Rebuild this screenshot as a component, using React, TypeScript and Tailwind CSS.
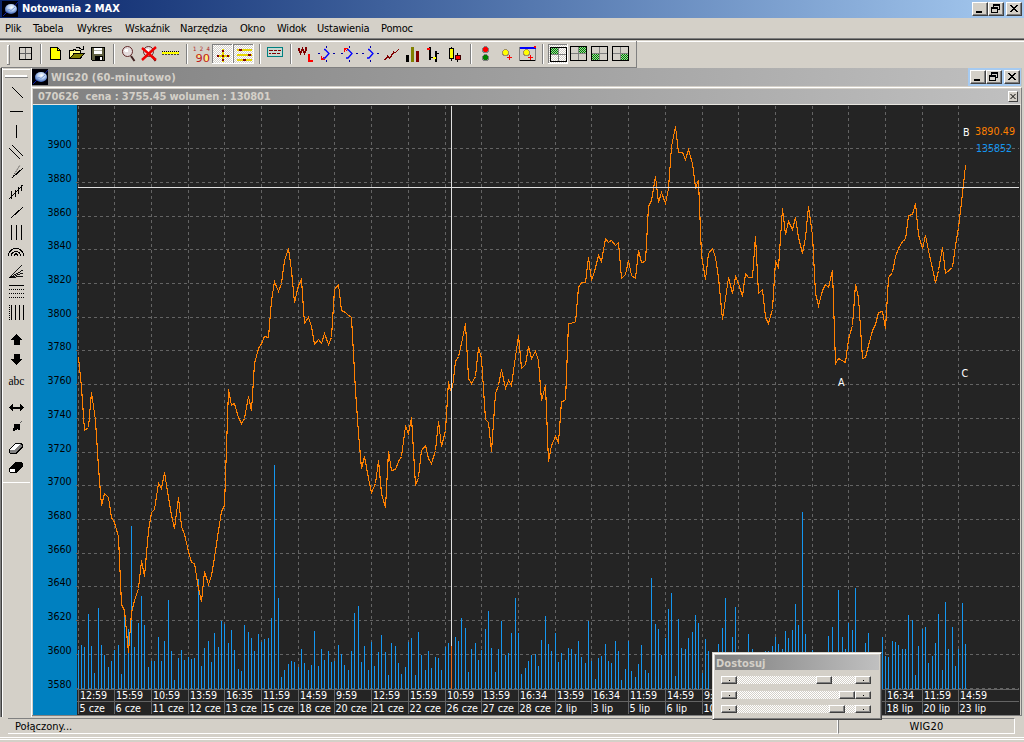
import React from "react";

const MENU = [
  { label: "Plik", width: "w-[28px]" },
  { label: "Tabela", width: "w-[44px]" },
  { label: "Wykres", width: "w-[48px]" },
  { label: "Wskaźnik", width: "w-[55px]" },
  { label: "Narzędzia", width: "w-[60px]" },
  { label: "Okno", width: "w-[37px]" },
  { label: "Widok", width: "w-[40px]" },
  { label: "Ustawienia", width: "w-[64px]" },
  { label: "Pomoc", width: "w-[40px]" },
];

const GRID_Y = [148, 182, 216, 249, 283, 317, 350, 384, 418, 452, 485, 519, 553, 586, 620, 654, 688];

const AXIS = [
  ["12:59", "5 cze"], ["15:59", "6 cze"], ["10:59", "11 cze"], ["13:59", "12 cze"], ["16:35", "13 cze"],
  ["11:59", "15 cze"], ["14:59", "18 cze"], ["9:59", "20 cze"], ["12:59", "21 cze"], ["15:59", "22 cze"],
  ["10:59", "26 cze"], ["13:59", "27 cze"], ["16:34", "28 cze"], ["13:59", "2 lip"], ["16:34", "3 lip"],
  ["11:59", "5 lip"], ["14:59", "6 lip"], ["9:59", "10 lip"], ["", ""], ["", ""], ["", ""], ["", ""],
  ["16:34", "18 lip"], ["11:59", "20 lip"], ["14:59", "23 lip"],
];

const PRICE =
  "78,357 81,387 84,430 88,427 91,392 95,420 98,467 101,505 104,493 108,497 111,517 114,522 118,536 121,604 124,610 128,652 131,612 134,600 138,588 141,560 144,576 148,530 151,512 154,509 158,483 161,488 164,472 168,497 171,515 174,528 178,497 181,526 184,534 188,551 191,562 194,563 198,588 201,601 204,571 208,584 211,575 214,557 218,530 221,511 224,505 228,389 231,405 234,403 238,417 241,423 244,418 248,396 251,410 254,363 258,348 261,343 264,336 268,337 271,300 274,281 278,291 281,283 284,260 288,248 291,270 294,302 298,285 301,279 304,323 308,317 311,326 314,344 318,339 321,343 324,333 328,344 331,337 334,289 338,284 341,310 345,312 348,315 351,317 355,390 358,433 361,468 364,456 368,478 371,492 375,483 378,460 381,493 385,507 388,451 391,470 395,469 398,461 401,456 405,426 408,433 411,417 415,485 418,477 421,450 425,445 428,458 431,463 435,450 438,421 441,446 445,430 448,381 450,390 452,387 455,361 458,356 461,343 465,323 468,378 471,383 475,376 478,347 481,358 485,419 488,422 491,451 495,393 498,385 501,369 505,388 508,380 511,385 514,363 518,335 521,368 525,364 528,346 531,358 535,351 538,360 541,400 545,385 548,461 551,445 555,436 558,442 561,401 565,400 568,323 575,322 578,287 581,282 585,282 588,257 591,280 594,271 598,255 601,261 605,238 608,242 611,240 615,245 618,242 621,278 625,274 628,260 631,275 635,278 638,250 641,262 645,261 648,206 651,200 655,176 658,202 661,192 665,203 668,188 671,146 675,126 678,152 682,152 685,159 688,149 692,163 695,187 698,180 701,255 705,279 708,253 712,248 715,257 718,277 722,319 725,298 728,277 732,293 735,276 738,283 742,296 745,273 748,277 752,277 755,236 758,293 762,289 765,317 768,323 772,309 775,261 778,267 782,208 785,234 788,221 792,229 795,217 798,237 802,253 805,237 808,206 812,235 815,293 818,305 822,290 825,284 828,287 832,270 835,363 838,358 845,362 848,339 852,325 855,284 858,297 862,358 865,357 868,345 872,330 875,324 878,312 882,311 885,328 888,277 892,272 895,256 898,248 902,241 905,239 908,215 912,214 915,203 918,234 922,248 925,235 928,250 932,268 935,282 938,270 942,247 945,273 952,267 955,245 958,227 961,202 965,165";

// one row per grid column, 11 hourly bars each
const VOLUME = [
  39, 44, 42, 75, 43, 16, 81, 44, 34, 22, 28,
  39, 44, 15, 72, 60, 163, 42, 66, 93, 64, 22,
  28, 28, 52, 28, 48, 89, 38, 9, 31, 39, 29,
  32, 30, 31, 110, 23, 41, 48, 27, 56, 42, 68,
  65, 46, 59, 39, 20, 18, 64, 57, 51, 38, 55,
  47, 50, 51, 71, 224, 91, 12, 19, 25, 28, 27,
  22, 40, 26, 19, 24, 58, 23, 40, 29, 38, 27,
  28, 44, 35, 24, 19, 38, 76, 83, 27, 43, 19,
  47, 23, 37, 54, 37, 14, 46, 43, 26, 15, 22,
  47, 51, 14, 57, 34, 19, 38, 21, 32, 31, 19,
  42, 46, 43, 52, 48, 71, 61, 17, 40, 46, 29,
  39, 60, 78, 41, 17, 40, 68, 34, 36, 56, 91,
  56, 15, 21, 28, 34, 35, 23, 49, 73, 45, 38,
  56, 27, 36, 29, 41, 40, 35, 48, 32, 26, 68,
  28, 10, 31, 33, 45, 28, 26, 48, 38, 9, 20,
  48, 18, 12, 25, 44, 19, 16, 111, 65, 60, 34,
  51, 80, 96, 13, 70, 41, 40, 51, 57, 74, 66,
  16, 50, 38, 32, 32, 45, 61, 91, 32, 52, 82,
  32, 32, 32, 55, 40, 32, 32, 32, 38, 38, 43,
  52, 45, 40, 58, 51, 59, 85, 64, 177, 55, 32,
  39, 32, 32, 32, 32, 53, 62, 32, 99, 52, 40,
  66, 59, 101, 32, 32, 46, 56, 32, 32, 32, 52,
  33, 32, 48, 47, 44, 40, 40, 74, 69, 14, 43,
  60, 62, 26, 33, 46, 75, 19, 87, 40, 62, 23,
  40, 86, 45,
];

const barX = (i: number) => Math.floor(78 + 3.337 * i);

interface GlyphProps {
  x: number;
  y?: number;
  w: number;
  h?: number;
  className?: string;
  children?: React.ReactNode;
}

// Every glyph is drawn in window coordinates
function Glyph({ x, y = 43, w, h = 22, className = "", children }: GlyphProps) {
  return (
    <svg
      width={w}
      height={h}
      viewBox={`${x} ${y} ${w} ${h}`}
      shapeRendering="crispEdges"
      fill="none"
      className={`shrink-0 ${className}`}
    >
      {children}
    </svg>
  );
}

function Sep({ x, w, at }: { x: number; w: number; at: number }) {
  return (
    <Glyph x={x} w={w}>
      <rect x={at} y={44} width={1} height={20} fill="#808080" />
      <rect x={at + 1} y={44} width={1} height={20} fill="#fff" />
    </Glyph>
  );
}

function Pressed({ x, w }: { x: number; w: number }) {
  return (
    <>
      <rect x={x} y={44} width={w} height={20} fill="url(#dither)" />
      <path d={`M${x + 0.5} 64V44.5H${x + w}`} stroke="#808080" />
      <path d={`M${x} 63.5H${x + w - 0.5}V44`} stroke="#fff" />
    </>
  );
}

function Quad({ x, y = 47, fx, fy }: { x: number; y?: number; fx: number; fy: number }) {
  return (
    <>
      <path d={`M${x + 8.5} ${y}v14M${x} ${y + 7.5}h17`} stroke="#808080" />
      <rect x={fx} y={fy} width={7} height={6} fill="url(#green)" />
      <rect x={x + 0.5} y={y + 0.5} width={16} height={14} stroke="#000" />
    </>
  );
}

function Magnifier({ x }: { x: number }) {
  return (
    <>
      <circle cx={x + 5.5} cy={51.5} r={5} fill="#e4dcdc" stroke="#602828" shapeRendering="auto" />
      <circle cx={x + 4.5} cy={50.5} r={2} fill="#fff" />
      <path d={`M${x + 9} 56l3.5 5`} stroke="#402020" strokeWidth={2} shapeRendering="auto" />
    </>
  );
}

function Turn({ x, children }: { x: number; children?: React.ReactNode }) {
  return (
    <>
      <path d={`M${x - 1} 49.5h1l4 4-4 4.500h-2`} stroke="#0000ff" strokeWidth={1.3} shapeRendering="auto" />
      <path d={`M${x + 1.5} 46v2M${x + 1.5} 60v2M${x - 7} 53.5h2M${x + 8} 53.5h2`} stroke="#0000a0" />
      {children}
    </>
  );
}

function Globe({ className = "" }: { className?: string }) {
  return (
    <svg width="16" height="16" viewBox="0 0 16 16" className={`shrink-0 ${className}`}>
      <defs>
        <radialGradient id="globe" cx="55%" cy="35%" r="65%">
          <stop offset="0" stopColor="#ffffff" />
          <stop offset="0.5" stopColor="#b4ccf0" />
          <stop offset="1" stopColor="#3a62b8" />
        </radialGradient>
      </defs>
      <rect width="16" height="16" fill="#000008" />
      <ellipse cx="9" cy="8" rx="6" ry="5" fill="url(#globe)" />
      <path d="M3.500 10L7 8.500L9 9.500L13 6" fill="none" stroke="#7898d4" strokeWidth="1" />
      <path d="M1 15L5 11M13 4.500L16 1" fill="none" stroke="#101ea0" strokeWidth="1" />
    </svg>
  );
}

function CaptionButton({ kind }: { kind: "min" | "restore" | "close" }) {
  return (
    <div className="h-[14px] w-4 shrink-0 border border-t-white border-r-[#404040] border-b-[#404040] border-l-white bg-[#d4d0c8] shadow-[inset_-1px_-1px_#808080]">
      <svg width="14" height="12" viewBox="0 0 14 12" shapeRendering="crispEdges" fill="none">
        {kind === "min" && <path d="M3 9h6" stroke="#000" strokeWidth="2" />}
        {kind === "restore" && (
          <path d="M4.5 4V1.5h6v5H9M4 2h7M2.5 4.5h6v5h-6zM2 5h7" stroke="#000" />
        )}
        {kind === "close" && (
          <path
            d="M3 2h2v1h1v1h2V3h1V2h2v1h-1v1H9v1H8v1h1v1h1v1h1v1H9V8H8V7H6v1H5v1H3V8h1V7h1V6h1V5H5V4H4V3H3z"
            fill="#000"
          />
        )}
      </svg>
    </div>
  );
}

function TitleBar() {
  return (
    <div className="flex h-[18px] shrink-0 items-center bg-linear-to-r from-[#0a246a] to-[#a6caf0] pr-[2px] pl-[2px]">
      <Globe />
      <span className="ml-1 flex-1 text-[11px] leading-[18px] font-bold tracking-[-0.05px] text-white">
        Notowania 2 MAX
      </span>
      <CaptionButton kind="min" />
      <CaptionButton kind="restore" />
      <div className="w-[2px]" />
      <CaptionButton kind="close" />
    </div>
  );
}

function MenuBar() {
  return (
    <div className="flex h-5 shrink-0 pt-px pl-[5px] text-[11px] leading-5 tracking-[-0.2px]">
      {MENU.map((item) => (
        <div key={item.label} className={`shrink-0 whitespace-nowrap ${item.width}`}>
          {item.label}
        </div>
      ))}
    </div>
  );
}

function Toolbar() {
  return (
    <div className="flex h-[27px] w-[636px] shrink-0 border-r border-b border-[#808080] pt-[2px] pl-[2px]">
      <Glyph x={3} w={9}>
        <path d="M7.5 64V45.5h2" stroke="#fff" />
        <path d="M9.5 45v19.5h-3" stroke="#808080" />
      </Glyph>
      <Glyph x={12} w={24}>
        <rect x={19.5} y={47.5} width={12} height={12} stroke="#000" />
        <path d="M25.5 48v11M20 53.5h11" stroke="#606060" />
      </Glyph>
      <Sep x={36} w={8} at={40} />
      <Glyph x={44} w={21}>
        <path d="M50.5 47.5h7l3 3v9h-10z" fill="#ffff00" stroke="#000" />
        <path d="M57.5 47v3.5h3" stroke="#000" />
      </Glyph>
      <Glyph x={65} w={22}>
        <path d="M69.5 58.5v-8h4v-1h2v1h5v3h3l-3.500 5.500z" fill="#ffff80" stroke="#000" />
        <path d="M70 58.5l4-5h10l-4 5z" fill="#808000" stroke="#000" />
        <path d="M76 47.500h3l2 1.500h2M83.500 46v4" stroke="#000" />
      </Glyph>
      <Glyph x={87} w={21}>
        <path d="M91.500 47.500h13v13h-12l-1-1z" fill="#606040" stroke="#000" />
        <rect x={94} y={48} width={8} height={6} fill="#fff" />
        <rect x={94} y={50} width={8} height={1} fill="#b0b0a0" />
        <rect x={95} y={56} width={8} height={5} fill="#000" />
        <rect x={100} y={57} width={2} height={3} fill="#fff" />
      </Glyph>
      <Sep x={108} w={10} at={113} />
      <Glyph x={118} w={20}>
        <Magnifier x={122} />
      </Glyph>
      <Glyph x={138} w={22}>
        <Magnifier x={143} />
        <path d="M142 48l14 12M156 47l-14 13" stroke="#f00000" strokeWidth={2.4} shapeRendering="auto" />
      </Glyph>
      <Glyph x={160} w={22}>
        <rect x={162} y={52} width={17} height={2} fill="#ffff00" />
        <path d="M162 51.500h17" stroke="#000" strokeDasharray="1 1" />
        <path d="M162 54.500h17" stroke="#404040" strokeDasharray="2 1" />
      </Glyph>
      <Sep x={182} w={8} at={186} />
      <Glyph x={190} w={22}>
        <rect x={197} y={54} width={3} height={3} fill="#ffee80" />
        <rect x={205} y={54} width={3} height={7} fill="#ffee80" />
        <text x={193} y={50.5} fontSize={6} textLength={17} fill="#b02020">
          124
        </text>
        <text x={195.500} y={62} fontSize={10.500} textLength={14.500} lengthAdjust="spacingAndGlyphs" fill="#c02020">
          90
        </text>
      </Glyph>
      <Glyph x={212} w={21}>
        <Pressed x={212} w={21} />
        <path d="M223 49v13M217 56h13" stroke="#e8d800" strokeWidth={2} />
        <path d="M222 50h2v2h-2zM222 59h2v2h-2zM217 55h2v2h-2zM227 55h2v2h-2zM222 55h2v2h-2z" fill="#800000" />
      </Glyph>
      <Glyph x={233} w={22}>
        <Pressed x={233} w={21} />
        <path d="M237 50h15M237 55h15M237 60h15" stroke="#e8d800" strokeWidth={2} />
        <path d="M239 49h3v2h-3zM248 54h3v2h-3zM243 59h3v2h-3z" fill="#800000" />
      </Glyph>
      <Sep x={255} w={9} at={259} />
      <Glyph x={264} w={22}>
        <rect x={267.500} y={47.500} width={15} height={9} fill="#c8d8d0" stroke="#008080" />
        <path d="M269 50.500h4M274 50.500h3M278 50.500h3M269 53.500h2M272 53.500h4M277 53.500h3" stroke="#800000" />
      </Glyph>
      <Sep x={286} w={8} at={290} />
      <Glyph x={294} w={21}>
        <path d="M299 48v2l1.500 3 2-4 2 4 1.500-3v-3" stroke="#800000" strokeWidth={1.800} />
        <path d="M309 54v6.500h4" stroke="#ff0000" strokeWidth={2} />
      </Glyph>
      <Glyph x={315} w={22}>
        <Turn x={325}>
          <path d="M321.500 56v3.500h3M322 59l2-2" stroke="#ff0000" />
        </Turn>
      </Glyph>
      <Glyph x={337} w={21}>
        <Turn x={348}>
          <path d="M344.500 52v-3.500h3M345 49l2 2" stroke="#ff0000" />
        </Turn>
      </Glyph>
      <Glyph x={358} w={22}>
        <Turn x={369} />
      </Glyph>
      <Glyph x={380} w={22}>
        <path d="M385 60l3-4 2 2 4-6 1 1 4-4" stroke="#800000" strokeWidth={1.400} />
      </Glyph>
      <Glyph x={402} w={20}>
        <rect x={406} y={55} width={3} height={7} fill="#000" />
        <rect x={411} y={47} width={3} height={15} fill="#808000" />
        <rect x={416} y={51} width={3} height={11} fill="#800000" />
      </Glyph>
      <Glyph x={422} w={22}>
        <path d="M430 47v13M430 57.500h3M436 51v11M436 53.500h3" stroke="#000" strokeWidth={1.600} />
        <path d="M427 48.500h3" stroke="#ff0000" strokeWidth={2} />
        <path d="M434 59v-1h2" stroke="#ffff00" strokeWidth={2} />
      </Glyph>
      <Glyph x={444} w={22}>
        <path d="M451.500 47v14M457.500 53v9" stroke="#000" />
        <rect x={449.500} y={48.500} width={4} height={10} fill="#ffff00" stroke="#000" />
        <rect x={455.500} y={55.500} width={5} height={4} fill="#ff0000" stroke="#400000" />
      </Glyph>
      <Sep x={466} w={9} at={470} />
      <Glyph x={475} w={22}>
        <circle cx={485.500} cy={49.500} r={3} fill="#ff0000" stroke="#808080" />
        <circle cx={485.500} cy={57.500} r={3} fill="#008000" stroke="#808080" />
      </Glyph>
      <Glyph x={497} w={19}>
        <circle cx={505.500} cy={52.500} r={3} fill="#ffff00" stroke="#a09060" />
        <path d="M509.500 55v5M507 57.500h5" stroke="#ff0000" />
      </Glyph>
      <Glyph x={516} w={22}>
        <rect x={519.500} y={47.500} width={16} height={13} stroke="#808080" />
        <rect x={520} y={47} width={16} height={2} fill="#0000ff" />
        <rect x={534} y={46} width={2} height={2} fill="#ff0000" />
        <path d="M520 60.500h15" stroke="#000" />
        <circle cx={526.500} cy={52.500} r={3} fill="#ffff00" stroke="#a09060" />
        <path d="M530.500 55v5M528 57.500h5" stroke="#ff0000" />
      </Glyph>
      <Sep x={538} w={9} at={542} />
      <Glyph x={547} w={22}>
        <Pressed x={548} w={20} />
        <Quad x={550} fx={551} fy={48} />
      </Glyph>
      <Glyph x={569} w={20}>
        <Quad x={570} y={46} fx={579} fy={47} />
      </Glyph>
      <Glyph x={589} w={21}>
        <Quad x={591} y={46} fx={592} fy={54} />
      </Glyph>
      <Glyph x={610} w={22}>
        <Quad x={612} y={46} fx={621} fy={54} />
      </Glyph>
    </div>
  );
}

function DrawingTools() {
  return (
    <div className="flex h-[414px] w-[27px] flex-col border-t border-b border-white pt-[3px]">
      <Glyph x={3} y={73} w={27} h={7}>
        <rect x={5} y={75} width={22} height={2} fill="#fff" />
        <rect x={5} y={77} width={23} height={1} fill="#808080" />
      </Glyph>
      <Glyph x={3} y={80} w={27} h={23}>
        <path d="M12 87l11 11" stroke="#000" />
      </Glyph>
      <Glyph x={3} y={103} w={27} h={19}>
        <path d="M10 111.500h13" stroke="#000" />
      </Glyph>
      <Glyph x={3} y={122} w={27} h={20}>
        <path d="M16.500 125v13" stroke="#000" />
      </Glyph>
      <Glyph x={3} y={142} w={27} h={20}>
        <path d="M9 148l11 11M12 145l11 11" stroke="#000" />
      </Glyph>
      <Glyph x={3} y={162} w={27} h={19}>
        <path d="M12 178l11-10" stroke="#000" />
        <path d="M12 178l8-13" stroke="#000" strokeDasharray="1 1.500" shapeRendering="auto" />
      </Glyph>
      <Glyph x={3} y={181} w={27} h={21}>
        <path d="M9 199L23 185M11.500 191v8M15.500 190v7M18.500 187v7M21.500 185v6" stroke="#000" />
      </Glyph>
      <Glyph x={3} y={202} w={27} h={20}>
        <path d="M11 218l12-11" stroke="#000" />
      </Glyph>
      <Glyph x={3} y={222} w={27} h={21}>
        <path d="M11.500 225v15M16.500 225v15M21.500 225v15" stroke="#000" />
      </Glyph>
      <Glyph x={3} y={243} w={27} h={19}>
        <path d="M8.500 256c0-10 15-10 15 0M11.500 256c0-6 9-6 9 0M14.500 256c0-3 3-3 3 0" stroke="#000" />
      </Glyph>
      <Glyph x={3} y={262} w={27} h={20}>
        <path d="M9 278L22 265M9 278l14-8M9 278l14-5M9 278l14-2" stroke="#000" strokeWidth={0.900} />
      </Glyph>
      <Glyph x={3} y={282} w={27} h={20}>
        <path d="M9 285.500h15" stroke="#000" />
        <path d="M9 289.500h15M9 293.500h15M9 297.500h15" stroke="#000" strokeDasharray="1 1" />
      </Glyph>
      <Glyph x={3} y={302} w={27} h={22}>
        <path d="M9.500 305v15" stroke="#000" strokeDasharray="1 1" />
        <path d="M11.500 305v15M15.500 305v15M19.500 305v15M23.500 305v15" stroke="#000" />
      </Glyph>
      <Glyph x={3} y={324} w={27} h={26}>
        <path d="M16.500 334l6 6h-3v5h-6v-5h-3z" fill="#000" />
      </Glyph>
      <Glyph x={3} y={350} w={27} h={20}>
        <path d="M16.500 365l6-6h-3v-5h-6v5h-3z" fill="#000" />
      </Glyph>
      <Glyph x={3} y={370} w={27} h={23}>
        <text x={8.500} y={385} fontSize={12.500} textLength={16} lengthAdjust="spacingAndGlyphs" fill="#000" fontFamily="Liberation Serif, serif">
          abc
        </text>
      </Glyph>
      <Glyph x={3} y={393} w={27} h={24}>
        <path d="M9 407.500l4-4v3h7v-3l4 4-4 4v-3h-7v3z" fill="#000" />
      </Glyph>
      <Glyph x={3} y={417} w={27} h={20}>
        <path d="M14 424h6v6h-2v-1h-1v1h-2v1h-2v-3h1z" fill="#000" />
        <path d="M20 422h1v1h-1zM21 421h1v1h-1z" fill="#606060" />
      </Glyph>
      <Glyph x={3} y={437} w={27} h={20}>
        <path d="M9.500 449.500l6-6h5.500l1 1v3l-6 6h-5.500l-1-1z" fill="#808080" stroke="#000" />
        <path d="M10 449.500l6-5.500h5l-6 5.500z" fill="#fff" />
      </Glyph>
      <Glyph x={3} y={457} w={27} h={20}>
        <path d="M9.500 468.500l6-6h5.500l1 1v3l-6 6h-5.500l-1-1z" fill="#000" stroke="#000" />
        <path d="M10 469h5v2.500h-5z" fill="#fff" />
      </Glyph>
    </div>
  );
}

function Chart() {
  return (
    <svg
      width="987"
      height="610"
      viewBox="33 105 987 610"
      className="block shrink-0 font-['DejaVu_Sans',sans-serif] font-stretch-normal"
    >
      <rect x="33" y="105" width="987" height="610" fill="#242424" />
      <rect x="33" y="105" width="44" height="610" fill="#0080c0" />

      <g shapeRendering="crispEdges" fill="none">
        <g stroke="#646464" strokeDasharray="3 3">
          {GRID_Y.map((y) => (
            <path key={y} d={`M76 ${y + 0.5}H1019`} />
          ))}
          {AXIS.map((_, i) => (
            <path key={i} d={`M${barX(i * 11) + 0.5} 106V689`} />
          ))}
        </g>

        {VOLUME.map((v, i) => (
          <rect key={i} x={barX(i)} y={689 - v} width="1" height={v} fill={i === 112 ? "#e8681c" : "#1496f0"} />
        ))}

        <polyline points={PRICE} stroke="#ff8000" strokeWidth="1.1" transform="translate(0.5 0.5)" />
        <path d="M78 187.500H1019M451.500 106V646" stroke="#e0e0e0" />

        <g stroke="#646464">
          <path d="M77 689.500H1019M77 701.500H1019" />
          {AXIS.map((_, i) => (
            <path key={i} d={`M${barX(i * 11) + 0.5} 689V714`} />
          ))}
        </g>
      </g>

      <g fontSize="9.6" fill="#000">
        {GRID_Y.map((y, i) => (
          <text key={y} x="47.500" y={y} textLength="24">
            {3900 - i * 20}
          </text>
        ))}
      </g>
      <g fontSize="9.6" fill="#fff">
        {AXIS.map(([time, date], i) => (
          <g key={i}>
            <text x={barX(i * 11) + 2} y="699" textLength={time ? time.length * 6 - 3 : undefined}>
              {time}
            </text>
            <text x={barX(i * 11) + 1.5} y="712">
              {date}
            </text>
          </g>
        ))}
        <text x="963" y="136">B</text>
        <text x="838" y="386">A</text>
        <text x="961.500" y="377">C</text>
      </g>
      <text x="975" y="135" fontSize="9.6" fill="#ff8000" textLength="40">
        3890.49
      </text>
      <text x="976" y="152" fontSize="9.6" fill="#1496f0" textLength="36">
        135852
      </text>
    </svg>
  );
}

function ScrollKnob({ dot }: { dot?: boolean }) {
  return (
    <div className="flex h-2 w-4 shrink-0 items-center justify-center border border-t-white border-r-[#404040] border-b-[#404040] border-l-white bg-[#d4d0c8] shadow-[inset_-1px_-1px_#808080]">
      {dot && <div className="h-px w-px bg-black" />}
    </div>
  );
}

function Scroller({ gap }: { gap: number }) {
  return (
    <div className="flex h-2 w-[150px] bg-[repeating-conic-gradient(#ffffff_0_25%,#d4d0c8_0_50%)] bg-[length:2px_2px]">
      <ScrollKnob dot />
      <div className="shrink-0" style={{ width: gap }} />
      <ScrollKnob />
      <div className="flex-1" />
      <ScrollKnob dot />
    </div>
  );
}

function AdjustPanel() {
  return (
    <div className="absolute top-[652px] left-[712px] h-[68px] w-[170px] border border-t-[#d4d0c8] border-r-[#404040] border-b-[#404040] border-l-[#d4d0c8] bg-[#d4d0c8] shadow-[inset_1px_1px_#fff,inset_-1px_-1px_#808080]">
      <div className="mx-[2px] mt-[2px] h-[15px] bg-linear-to-r from-[#808080] to-[#c0c0c0] pl-[1px] text-[11px] leading-[17px] font-bold tracking-[0.1px] text-[#d4d0c8]">
        Dostosuj
      </div>
      <div className="flex flex-col pt-[6px] pl-[8px]">
        <Scroller gap={79} />
        <div className="h-[7px]" />
        <Scroller gap={102} />
        <div className="h-[6px]" />
        <Scroller gap={92} />
      </div>
    </div>
  );
}

function ChartWindow() {
  return (
    <div className="flex w-[991px] flex-col border-l border-white">
      <div className="flex h-[18px] bg-linear-to-r from-[#808080] to-[#c0c0c0] pr-px">
        <Globe className="mt-px" />
        <span className="ml-[3px] flex-1 text-[11px] leading-[19px] font-bold tracking-[0.15px] text-[#d4d0c8]">
          WIG20 (60-minutowo)
        </span>
        <div className="flex h-full w-[53px] items-center bg-[#a6caf0] pl-[2px]">
          <CaptionButton kind="min" />
          <CaptionButton kind="restore" />
          <div className="w-[2px]" />
          <CaptionButton kind="close" />
        </div>
      </div>
      <div className="mt-px flex h-[629px] flex-col border-t border-r border-b border-t-white border-r-[#808080] border-b-[#808080] pt-px pl-px">
        <div className="flex h-[15px] w-[987px] items-center bg-linear-to-r from-[#808080] to-[#c0c0c0] pr-[2px] pl-[5px]">
          <span className="flex-1 text-[11px] leading-[17px] font-bold tracking-[-0.1px] whitespace-pre text-[#d4d0c8]">
            {"070626  cena : 3755.45 wolumen : 130801"}
          </span>
          <div className="h-[11px] w-[10px] border border-t-white border-r-[#404040] border-b-[#404040] border-l-white bg-[#d4d0c8]">
            <svg width="8" height="9" viewBox="0 0 8 9">
              <path d="M1.500 2l5 5M6.500 2l-5 5" stroke="#000" />
            </svg>
          </div>
        </div>
        <div className="h-px w-full shrink-0 bg-[#e8e6e0]" />
        <Chart />
      </div>
    </div>
  );
}

function StatusBar() {
  return (
    <div className="flex h-4 shrink-0 pl-[8px] text-[11px] leading-4">
      <div className="w-[830px] border-t border-r border-b border-t-[#808080] border-r-white border-b-white pl-[7px]">
        Połączony...
      </div>
      <div className="w-[177px] border border-t-[#808080] border-r-white border-b-white border-l-[#808080] text-center tracking-[0.2px]">
        WIG20
      </div>
    </div>
  );
}

export default function App() {
  return (
    <div className="relative flex h-[742px] w-[1024px] flex-col overflow-hidden bg-[#d4d0c8] font-['DejaVu_Sans_Condensed','DejaVu_Sans',sans-serif] font-stretch-condensed text-black">
      <svg width="0" height="0" className="absolute">
        <defs>
          <pattern id="dither" width="2" height="2" patternUnits="userSpaceOnUse">
            <rect width="2" height="2" fill="#d4d0c8" />
            <path d="M0 0h1v1h-1zM1 1h1v1h-1z" fill="#fff" />
          </pattern>
          <pattern id="green" width="2" height="2" patternUnits="userSpaceOnUse">
            <rect width="2" height="2" fill="#a0d0a0" />
            <path d="M0 0h1v1h-1zM1 1h1v1h-1z" fill="#008000" />
          </pattern>
        </defs>
      </svg>
      <TitleBar />
      <MenuBar />
      <div className="h-px shrink-0 bg-[#808080]" />
      <div className="h-px shrink-0 bg-[#404040]" />
      <div className="h-px shrink-0 bg-[#d4d0c8]" />
      <div className="h-px shrink-0 bg-white" />
      <div className="-mt-px ml-px shrink-0">
        <Toolbar />
      </div>
      <div className="flex h-[649px] shrink-0">
        <div className="w-px bg-[#808080]" />
        <div className="w-px bg-[#404040]" />
        <div className="w-px bg-white" />
        <div className="mt-px flex">
          <DrawingTools />
        </div>
        <div className="w-px" />
        <ChartWindow />
      </div>
      <div className="h-px shrink-0" />
      <StatusBar />
      <div className="mt-[3px] h-px shrink-0 bg-white" />
      <div className="mt-px h-px shrink-0 bg-white" />
      <AdjustPanel />
    </div>
  );
}
